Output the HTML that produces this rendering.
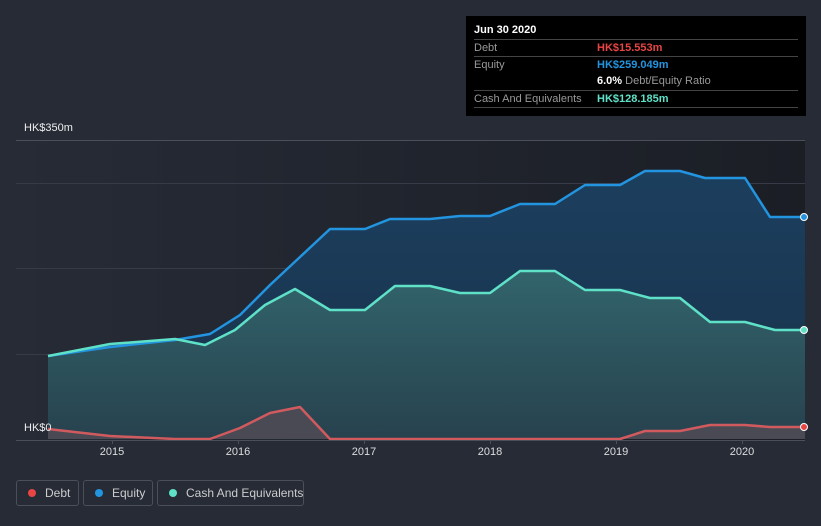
<!DOCTYPE html>
<html><head><meta charset="utf-8"><style>
html,body{margin:0;width:821px;height:526px;overflow:hidden}
body{background:#262b36;font-family:"Liberation Sans",sans-serif;position:relative}
.tt{position:absolute;left:466px;top:16px;width:340px;height:100px;background:#000;color:#fff;font-size:11px}
.tt .h{position:absolute;left:8px;top:8px;font-weight:bold}
.row{position:absolute;left:8px;width:324px;border-top:1px solid #444;height:16px;line-height:17px;color:#999}
.row span{position:absolute;left:123px}
.lg{position:absolute;top:480px;height:26px;border:1px solid #4a4f5a;border-radius:3px;color:#ccc;font-size:12px;line-height:25px;box-sizing:border-box;white-space:nowrap}
.lg i{position:absolute;left:11px;top:8px;width:8px;height:8px;border-radius:50%}
.lg b{font-weight:normal;position:absolute;left:28px;white-space:nowrap}
.yl{position:absolute;color:#eee;font-size:11px}
.xl{position:absolute;top:446px;color:#ddd;font-size:11px;width:40px;text-align:center}
</style></head><body>
<svg width="821" height="526" style="position:absolute;left:0;top:0">
<defs>
<linearGradient id="bg" x1="0" x2="1"><stop offset="0" stop-color="#262b36"/><stop offset="1" stop-color="#1b1e25"/></linearGradient>
<linearGradient id="eq" x1="0" y1="0" x2="0" y2="1"><stop offset="0" stop-color="#1c3f5e"/><stop offset="1" stop-color="#18314a"/></linearGradient>
<linearGradient id="ca" x1="0" y1="0" x2="0" y2="1"><stop offset="0" stop-color="#32646c"/><stop offset="1" stop-color="#27424e"/></linearGradient>
</defs>
<rect x="16" y="140" width="789" height="300" fill="url(#bg)"/>
<g stroke="#363b47" stroke-width="1"><line x1="16" y1="183.5" x2="805" y2="183.5"/><line x1="16" y1="268.5" x2="805" y2="268.5"/><line x1="16" y1="354.5" x2="805" y2="354.5"/></g>
<line x1="16" y1="140.5" x2="805" y2="140.5" stroke="#4a4f5a"/>
<path d="M48,356 L110,347 175,340 210,334 240,315 270,285 300,257 330,229 365,229 390,219 430,219 460,216 490,216 520,204 555,204 585,185 620,185 645,171 680,171 705,178 745,178 770,217 805,217 L805,439 48,439Z" fill="url(#eq)"/>
<path d="M48,356 L110,344 175,339 205,345 235,330 265,305 295,289 330,310 365,310 395,286 430,286 460,293 490,293 520,271 555,271 585,290 620,290 650,298 680,298 710,322 745,322 775,330 805,330 L805,439 48,439Z" fill="url(#ca)"/>
<path d="M48,429 L110,436 175,439 210,439 240,428 270,413 300,407 330,439 620,439 645,431 680,431 710,425 745,425 770,427 805,427 L805,439 48,439Z" fill="#4a4a55"/>
<g fill="none" stroke-width="2.5" stroke-linejoin="round">
<path d="M48,356 L110,347 175,340 210,334 240,315 270,285 300,257 330,229 365,229 390,219 430,219 460,216 490,216 520,204 555,204 585,185 620,185 645,171 680,171 705,178 745,178 770,217 805,217" stroke="#2394df"/>
<path d="M48,356 L110,344 175,339 205,345 235,330 265,305 295,289 330,310 365,310 395,286 430,286 460,293 490,293 520,271 555,271 585,290 620,290 650,298 680,298 710,322 745,322 775,330 805,330" stroke="#5fe1c8"/>
<path d="M48,429 L110,436 175,439 210,439 240,428 270,413 300,407 330,439 620,439 645,431 680,431 710,425 745,425 770,427 805,427" stroke="#d05a5e"/>
</g>
<line x1="16" y1="440.5" x2="805" y2="440.5" stroke="#4a4f5a"/>
<g stroke="#4a4f5a"><line x1="112.5" y1="440" x2="112.5" y2="444"/><line x1="238.5" y1="440" x2="238.5" y2="444"/><line x1="364.5" y1="440" x2="364.5" y2="444"/><line x1="490.5" y1="440" x2="490.5" y2="444"/><line x1="616.5" y1="440" x2="616.5" y2="444"/><line x1="742.5" y1="440" x2="742.5" y2="444"/></g>
<circle cx="804" cy="217" r="3.5" fill="#2394df" stroke="#fff"/>
<circle cx="804" cy="330" r="3.5" fill="#5fe1c8" stroke="#fff"/>
<circle cx="804" cy="427" r="3.5" fill="#e84545" stroke="#fff"/>
</svg>
<div class="yl" style="left:24px;top:122px">HK$350m</div>
<div class="yl" style="left:24px;top:422px">HK$0</div>
<div class="xl" style="left:92px">2015</div><div class="xl" style="left:218px">2016</div><div class="xl" style="left:344px">2017</div><div class="xl" style="left:470px">2018</div><div class="xl" style="left:596px">2019</div><div class="xl" style="left:722px">2020</div>
<div class="tt"><div class="h">Jun 30 2020</div>
<div class="row" style="top:23px">Debt<span style="color:#e84545;font-weight:bold">HK$15.553m</span></div>
<div class="row" style="top:40px">Equity<span style="color:#2394df;font-weight:bold">HK$259.049m</span></div>
<div class="row" style="top:57px;border:none"><span style="color:#999"><b style="color:#fff">6.0%</b> Debt/Equity Ratio</span></div>
<div class="row" style="top:74px;border-bottom:1px solid #444">Cash And Equivalents<span style="color:#5fe1c8;font-weight:bold">HK$128.185m</span></div>
</div>
<div class="lg" style="left:16px;width:63px"><i style="background:#e84545"></i><b>Debt</b></div>
<div class="lg" style="left:83px;width:70px"><i style="background:#2394df"></i><b>Equity</b></div>
<div class="lg" style="left:157px;width:147px"><i style="background:#5fe1c8"></i><b>Cash And Equivalents</b></div>
</body></html>
